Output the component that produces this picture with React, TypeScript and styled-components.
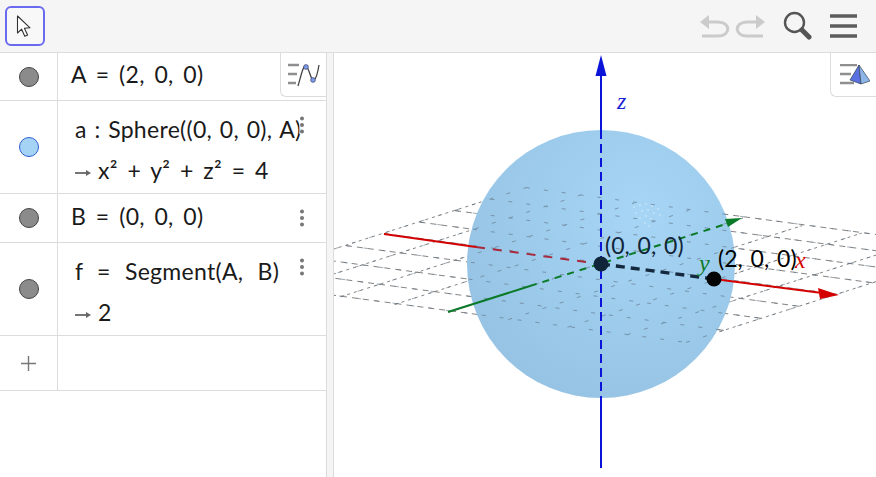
import React from 'react';
import styled, { createGlobalStyle } from 'styled-components';

const GlobalStyle = createGlobalStyle`
    html, body, #root {
        margin: 0;
        padding: 0;
        height: 100%;
        background: #fff;
        overflow: hidden;
    }
`;

const MATH_FONT = `'Lato', 'Open Sans', sans-serif`;
const DOT_GRAY = '#8b8b8b';

// rough projection of the xOy grid: units differ a bit either side of the origin
const project = (x: number, y: number) => {
    const sx = x < 0 ? 54.25 : 59.25;
    const sy = y < 0 ? 38 : 35.5;
    return { px: 601 + x * sx + y * sy, py: 264 + x * 7.6 - y * (y < 0 ? 12 : 11.5) };
};

const GRID_STEPS = [-4, -3, -2, -1, 0, 1, 2, 3, 4];

// specular specks on the sphere
const SPECKS = [
    [634, 207], [640, 205], [646, 204], [652, 206], [658, 209],
    [636, 213], [642, 211], [648, 210], [654, 213], [660, 215],
    [640, 218], [646, 216], [651, 219], [645, 223], [649, 226],
];

const ThreeDots = () => (
    <svg width="6" height="18" viewBox="0 0 6 18">
        <circle cx="3" cy="2.5" r="2" fill="#777" />
        <circle cx="3" cy="9" r="2" fill="#777" />
        <circle cx="3" cy="15.5" r="2" fill="#777" />
    </svg>
);

const ResultArrow = () => (
    <ArrowIcon width="16" height="10" viewBox="0 0 16 10">
        <path d="M0 5 H14" stroke="#666" strokeWidth="1.8" />
        <path d="M16 5 L11 2 V8 Z" fill="#666" />
    </ArrowIcon>
);

const App: React.FC = () => {
    return (
        <Page>
            <GlobalStyle />
            <Toolbar>
                <ModeButton>
                    <svg width="20" height="24" viewBox="0 0 20 24">
                        <path d="M2.5 2 L2.5 19 L6.6 15.2 L9.8 22.3 L12.6 21 L9.4 14.2 L15 13.8 Z" fill="#fff" stroke="#333" strokeWidth="1.1" strokeLinejoin="round" />
                    </svg>
                </ModeButton>
                <ToolbarActions>
                    <svg width="65" height="24" viewBox="0 0 65 24">
                        <g fill="none" stroke="#cbcbcb" strokeWidth="3">
                            <path d="M6 8 H18 C31 8 31 22 18 22 H2" />
                            <path d="M59 8 H47 C34 8 34 22 47 22 H63" />
                        </g>
                        <path d="M0 8 L9 1 V15 Z" fill="#cbcbcb" />
                        <path d="M65 8 L56 1 V15 Z" fill="#cbcbcb" />
                    </svg>
                    <svg width="29" height="29" viewBox="0 0 29 29">
                        <circle cx="11.5" cy="11.5" r="9.5" fill="none" stroke="#555" strokeWidth="2.4" />
                        <path d="M19 19 L26 26" stroke="#555" strokeWidth="5" strokeLinecap="round" />
                    </svg>
                    <svg width="27" height="24" viewBox="0 0 27 24">
                        <path d="M0 2 H27 M0 12 H27 M0 22 H27" stroke="#5c5c5c" strokeWidth="3.4" />
                    </svg>
                </ToolbarActions>
            </Toolbar>
            <Body>
                <AlgebraPanel>
                    <StyleTab>
                        <svg width="32" height="26" viewBox="0 0 32 26">
                            <path d="M0 3 H11 M0 12 H9 M0 21 H8" stroke="#8f8f8f" strokeWidth="2.4" />
                            <path d="M10 24 C13 14 15 3 18 4 C21 5 23 20 26 18 C28 17 30 9 31 3" fill="none" stroke="#444" strokeWidth="1.3" />
                            <circle cx="18" cy="5" r="2.4" fill="#7c9be8" stroke="#335" strokeWidth=".6" />
                            <circle cx="25" cy="18" r="2.4" fill="#7c9be8" stroke="#335" strokeWidth=".6" />
                        </svg>
                    </StyleTab>
                    <Row $height={48}>
                        <MarbleCell>
                            <Marble />
                        </MarbleCell>
                        <Formula $indent={13} $shift={-4}>
                            <FormulaLine>A = (2, 0, 0)</FormulaLine>
                        </Formula>
                    </Row>
                    <Row $height={93}>
                        <MarbleCell>
                            <Marble $fill="#a4d3f6" $edge="#2f5fd0" />
                        </MarbleCell>
                        <Formula $indent={17} $shift={6}>
                            <FormulaLine $words={1.5}>a : Sphere((0, 0, 0), A)</FormulaLine>
                            <FormulaLine>
                                <ResultArrow />x² + y² + z² = 4
                            </FormulaLine>
                        </Formula>
                        <MoreMenu>
                            <ThreeDots />
                        </MoreMenu>
                    </Row>
                    <Row $height={49}>
                        <MarbleCell>
                            <Marble />
                        </MarbleCell>
                        <Formula $indent={13} $shift={-4}>
                            <FormulaLine>B = (0, 0, 0)</FormulaLine>
                        </Formula>
                        <MoreMenu>
                            <ThreeDots />
                        </MoreMenu>
                    </Row>
                    <Row $height={93}>
                        <MarbleCell>
                            <Marble />
                        </MarbleCell>
                        <Formula $indent={17} $shift={6}>
                            <FormulaLine $words={8}>f = Segment(A, B)</FormulaLine>
                            <FormulaLine>
                                <ResultArrow />2
                            </FormulaLine>
                        </Formula>
                        <MoreMenu>
                            <ThreeDots />
                        </MoreMenu>
                    </Row>
                    <Row $height={55}>
                        <MarbleCell>
                            <PlusSign>
                                <svg width="15" height="15" viewBox="0 0 15 15">
                                    <path d="M7.5 0 V15 M0 7.5 H15" stroke="#777" strokeWidth="1.4" />
                                </svg>
                            </PlusSign>
                        </MarbleCell>
                    </Row>
                </AlgebraPanel>
                <Splitter />
                <GraphicsPanel>
                    <StyleTab>
                        <svg width="32" height="22" viewBox="0 0 32 22">
                            <path d="M2 1 H19 M2 10 H13 M2 19 H16" stroke="#8f8f8f" strokeWidth="2.4" />
                            <path d="M21 1 L12 16 L23 20 Z" fill="#5a6fe0" stroke="#345" strokeWidth=".7" />
                            <path d="M21 1 L23 20 L32 17 Z" fill="#8db6e6" stroke="#345" strokeWidth=".7" />
                        </svg>
                    </StyleTab>
                    <Scene viewBox="334 53 542 424">
                        <defs>
                            <radialGradient id="ball" gradientUnits="userSpaceOnUse" cx="640" cy="215" r="200">
                                <stop offset="0" stopColor="#a6d5f6" />
                                <stop offset="1" stopColor="#96c3e3" />
                            </radialGradient>
                        </defs>

                        <line x1="601" y1="72" x2="601" y2="130" stroke="#0a14d8" strokeWidth="2" />
                        <path d="M601 55 L595.5 76 H606.5 Z" fill="#0a14d8" />
                        <line x1="601" y1="398" x2="601" y2="468" stroke="#0a14d8" strokeWidth="2" />

                        <g stroke="#6f6f6f" strokeWidth="1" strokeDasharray="6 5" opacity=".85">
                            {GRID_STEPS.map(j => {
                                const a = project(-4, j);
                                const b = project(4, j);
                                return <line key={`x${j}`} x1={a.px} y1={a.py} x2={b.px} y2={b.py} />;
                            })}
                            {GRID_STEPS.map(i => {
                                const a = project(i, -4);
                                const b = project(i, 4);
                                return <line key={`y${i}`} x1={a.px} y1={a.py} x2={b.px} y2={b.py} strokeDasharray="3 4" />;
                            })}
                        </g>

                        <circle cx="601" cy="264" r="134" fill="url(#ball)" />

                        <g stroke="#5f7182" strokeWidth="1" strokeDasharray="4 14" opacity=".6">
                            {GRID_STEPS.map(j => {
                                const a = project(-4, j);
                                const b = project(4, j);
                                return <line key={`ix${j}`} x1={a.px} y1={a.py} x2={b.px} y2={b.py} />;
                            })}
                            {GRID_STEPS.map(i => {
                                const a = project(i, -4);
                                const b = project(i, 4);
                                return <line key={`iy${i}`} x1={a.px} y1={a.py} x2={b.px} y2={b.py} />;
                            })}
                        </g>
                        {SPECKS.map(([cx, cy]) => (
                            <circle key={`${cx}-${cy}`} cx={cx} cy={cy} r=".7" fill="#e4f3fd" />
                        ))}

                        <line x1="384" y1="234" x2="476" y2="247" stroke="#d40000" strokeWidth="2" />
                        <line x1="476" y1="247" x2="601" y2="264" stroke="#a8283c" strokeWidth="2" strokeDasharray="9 8" />
                        <line x1="448" y1="312" x2="530" y2="286" stroke="#0a7a28" strokeWidth="2" />
                        <line x1="530" y1="286" x2="726" y2="224" stroke="#0a7a28" strokeWidth="2" strokeDasharray="7 6" />
                        <path d="M742 218 L725 219 L728 227 Z" fill="#0a7a28" />

                        <line x1="601" y1="130" x2="601" y2="398" stroke="#0a14d8" strokeWidth="2" strokeDasharray="9 5" />

                        <line x1="714" y1="279" x2="822" y2="293" stroke="#d40000" strokeWidth="2" />
                        <path d="M839 295 L818 288 L820 299 Z" fill="#d40000" />

                        <line x1="601" y1="264" x2="714" y2="279" stroke="#14293d" strokeWidth="3.4" strokeDasharray="9 6" />
                        <circle cx="601" cy="264" r="7.5" fill="#10253a" />
                        <circle cx="714" cy="279" r="7.5" fill="#050505" />

                        <AxisLabel x="617" y="109" fill="#1a22d8">z</AxisLabel>
                        <AxisLabel x="699" y="271" fill="#0a7a28">y</AxisLabel>
                        <AxisLabel x="795" y="268" fill="#d40000">x</AxisLabel>
                        <PointLabel x="605" y="254" fill="#10253a">(0, 0, 0)</PointLabel>
                        <PointLabel x="718" y="267" fill="#000">(2, 0, 0)</PointLabel>
                    </Scene>
                </GraphicsPanel>
            </Body>
        </Page>
    );
};

export default App;

const Page = styled.div`
    display: flex;
    flex-direction: column;
    width: 876px;
    height: 477px;
    overflow: hidden;
    font-family: ${MATH_FONT};
`;

const Toolbar = styled.div`
    display: flex;
    align-items: center;
    justify-content: space-between;
    box-sizing: border-box;
    height: 53px;
    padding: 0 19px 1px 5px;
    background-color: #f5f5f5;
    border-bottom: 1px solid #dcdcdc;
`;

const ModeButton = styled.div`
    display: flex;
    align-items: center;
    justify-content: center;
    box-sizing: border-box;
    width: 40px;
    height: 40px;
    border: 2px solid #6a6af0;
    border-radius: 6px;
    background-color: #f8f8f8;
`;

const ToolbarActions = styled.div`
    display: flex;
    align-items: center;
    gap: 18px;
`;

const Body = styled.div`
    display: flex;
    flex: 1;
    min-height: 0;
`;

const AlgebraPanel = styled.div`
    position: relative;
    display: flex;
    flex-direction: column;
    width: 326px;
    background-color: #fff;
`;

const Splitter = styled.div`
    box-sizing: border-box;
    width: 8px;
    background-color: #f5f5f5;
    border-left: 1px solid #dcdcdc;
    border-right: 1px solid #dcdcdc;
`;

const GraphicsPanel = styled.div`
    position: relative;
    flex: 1;
    background-color: #fff;
`;

const Scene = styled.svg`
    display: block;
    width: 542px;
    height: 424px;
`;

const StyleTab = styled.div`
    position: absolute;
    top: 0;
    right: 0;
    z-index: 2;
    display: flex;
    align-items: center;
    justify-content: center;
    box-sizing: border-box;
    width: 46px;
    height: 44px;
    background-color: #fff;
    border-left: 1px solid #dcdcdc;
    border-bottom: 1px solid #dcdcdc;
    border-bottom-left-radius: 6px;
`;

const Row = styled.div<{ $height: number }>`
    position: relative;
    display: flex;
    box-sizing: border-box;
    height: ${p => p.$height}px;
    border-bottom: 1px solid #dcdcdc;
`;

const MarbleCell = styled.div`
    display: flex;
    align-items: center;
    justify-content: center;
    box-sizing: border-box;
    width: 58px;
    flex-shrink: 0;
    border-right: 1px solid #dcdcdc;
`;

const Marble = styled.div<{ $fill?: string; $edge?: string }>`
    box-sizing: border-box;
    width: 20px;
    height: 20px;
    border-radius: 50%;
    background-color: ${p => p.$fill ?? DOT_GRAY};
    border: 1px solid ${p => p.$edge ?? '#444'};
`;

const PlusSign = styled.div`
    display: flex;
`;

const Formula = styled.div<{ $indent: number; $shift: number }>`
    display: flex;
    flex-direction: column;
    justify-content: center;
    gap: 4px;
    padding-left: ${p => p.$indent}px;
    padding-top: ${p => Math.max(p.$shift, 0)}px;
    padding-bottom: ${p => Math.max(-p.$shift, 0)}px;
    min-width: 0;
    overflow: hidden;
`;

const FormulaLine = styled.div<{ $words?: number }>`
    font-size: 23px;
    line-height: 37px;
    word-spacing: ${p => p.$words ?? 3.5}px;
    letter-spacing: 0.3px;
    color: #1a1a1a;
    white-space: pre;
`;

const ArrowIcon = styled.svg`
    margin: 0 7px 0 0;
    vertical-align: 1px;
`;

const MoreMenu = styled.div`
    position: absolute;
    top: 15px;
    right: 21px;
    display: flex;
    background-color: rgba(255, 255, 255, 0.6);
`;

const AxisLabel = styled.text`
    font-family: 'Liberation Serif', serif;
    font-style: italic;
    font-size: 24px;
`;

const PointLabel = styled.text`
    font-family: ${MATH_FONT};
    font-size: 23px;
    word-spacing: 2px;
`;
